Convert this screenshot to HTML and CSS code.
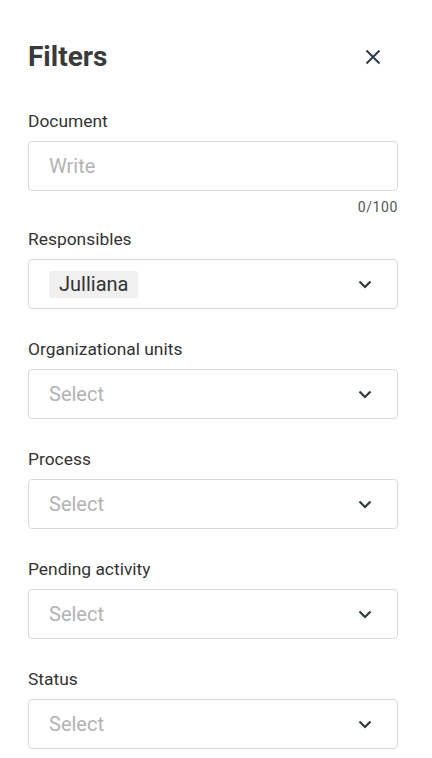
FILE: index.html
```html
<!DOCTYPE html>
<html>
<head>
<meta charset="utf-8">
<link rel="stylesheet" href="styles.css">
</head>
<body>
<div class="panel">
  <div class="header">
    <h1 class="title">Filters</h1>
    <button class="close" aria-label="Close">
      <svg width="16" height="16" viewBox="0 0 16 16"><path d="M1.5 1.5L14.5 14.5M14.5 1.5L1.5 14.5" stroke="#2f3b4a" stroke-width="2" fill="none"/></svg>
    </button>
  </div>

  <div class="field field-doc">
    <label class="label">Document</label>
    <div class="box"><span class="placeholder">Write</span></div>
    <div class="counter">0/100</div>
  </div>

  <div class="field">
    <label class="label">Responsibles</label>
    <div class="box select"><span class="chip">Julliana</span><svg class="chev" width="14" height="9" viewBox="0 0 14 9"><path d="M1.5 1.5L7 7L12.5 1.5" stroke="#2f3b3f" stroke-width="2.2" fill="none"/></svg></div>
  </div>

  <div class="field">
    <label class="label">Organizational units</label>
    <div class="box select"><span class="placeholder">Select</span><svg class="chev" width="14" height="9" viewBox="0 0 14 9"><path d="M1.5 1.5L7 7L12.5 1.5" stroke="#2f3b3f" stroke-width="2.2" fill="none"/></svg></div>
  </div>

  <div class="field">
    <label class="label">Process</label>
    <div class="box select"><span class="placeholder">Select</span><svg class="chev" width="14" height="9" viewBox="0 0 14 9"><path d="M1.5 1.5L7 7L12.5 1.5" stroke="#2f3b3f" stroke-width="2.2" fill="none"/></svg></div>
  </div>

  <div class="field">
    <label class="label">Pending activity</label>
    <div class="box select"><span class="placeholder">Select</span><svg class="chev" width="14" height="9" viewBox="0 0 14 9"><path d="M1.5 1.5L7 7L12.5 1.5" stroke="#2f3b3f" stroke-width="2.2" fill="none"/></svg></div>
  </div>

  <div class="field">
    <label class="label">Status</label>
    <div class="box select"><span class="placeholder">Select</span><svg class="chev" width="14" height="9" viewBox="0 0 14 9"><path d="M1.5 1.5L7 7L12.5 1.5" stroke="#2f3b3f" stroke-width="2.2" fill="none"/></svg></div>
  </div>
</div>
</body>
</html>
```

FILE: styles.css
```css
* { box-sizing: border-box; }
html, body { margin: 0; padding: 0; background: #fff; }
body { font-family: Roboto, "Liberation Sans", sans-serif; color: #333; }
.panel { padding: 40px 34px 0 28px; width: 432px; }
.header { display: flex; align-items: center; justify-content: space-between; height: 34px; margin-bottom: 37px; }
.title { margin: 0; font-size: 28px; font-weight: 700; line-height: 34px; color: #3a3a3a; }
.close { border: 0; background: none; padding: 0; margin-right: 17px; width: 16px; height: 16px; display: flex; }
.field { margin-bottom: 30px; }
.field-doc { margin-bottom: 14px; }
.label { display: block; font-size: 17.4px; line-height: 20px; margin-bottom: 10px; color: #333; }
.box { height: 50px; border: 1px solid #d9d9d9; border-radius: 4px; display: flex; align-items: center; padding: 0 20px; }
.select { justify-content: space-between; padding-right: 25px; }
.placeholder { font-size: 20px; color: #b3b3b3; }
.chip { background: #f0f0f0; font-size: 20px; line-height: 27px; padding: 0 10px; color: #333; border-radius: 2px; }
.chev { display: block; }
.counter { text-align: right; font-size: 14px; letter-spacing: 0.6px; line-height: 16px; margin-top: 8px; color: #555; }
```
